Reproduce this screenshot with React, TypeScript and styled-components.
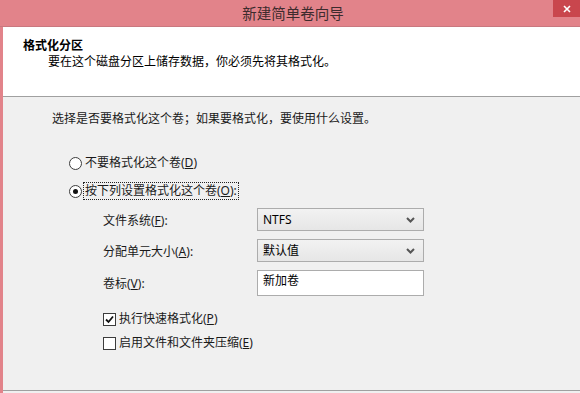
import React from "react";
import styled, { createGlobalStyle } from "styled-components";

const GlobalStyle = createGlobalStyle`
  html, body {
    margin: 0;
    padding: 0;
    background: #f0f0f0;
  }
  * {
    box-sizing: border-box;
  }
`;

const FONT = `"Segoe UI", "Noto Sans", "Noto Sans CJK SC", sans-serif`;

const Window = styled.div`
  width: 580px;
  height: 393px;
  background: #e2838a;
  display: flex;
  flex-direction: column;
  overflow: hidden;
  font-family: ${FONT};
  font-size: 12px;
  color: #1a1a1a;
`;

const TitleBar = styled.div`
  height: 27px;
  flex: none;
  display: grid;
  grid-template-columns: 27px 1fr 27px;
  align-items: start;
  border-bottom: 1px solid #c9787f;
`;

const Title = styled.div`
  grid-column: 2;
  height: 26px;
  line-height: 26px;
  text-align: center;
  padding-left: 6px;
  font-size: 14.5px;
  color: #3d2b2d;
  font-family: "Noto Sans CJK SC", sans-serif;
`;

const CloseButton = styled.div`
  grid-column: 3;
  height: 17px;
  background: #c9464d;
  color: #fff;
  display: flex;
  align-items: center;
  justify-content: center;
`;

const Frame = styled.div`
  flex: 1;
  margin-left: 3px;
  display: flex;
  flex-direction: column;
  background: #f0f0f0;
  padding-bottom: 2px;
`;

const Header = styled.header`
  height: 70px;
  flex: none;
  background: #fff;
  border-bottom: 1px solid #a0a0a0;
  padding: 11px 0 0 20px;
  line-height: 16px;
`;

const HeaderTitle = styled.div`
  font-weight: bold;
  color: #000;
`;

const HeaderText = styled.div`
  margin-left: 25px;
  color: #000;
`;

const Body = styled.section`
  flex: 1;
  border-bottom: 1px solid #a0a0a0;
  padding: 14px 0 0 49px;
  line-height: 16px;
`;

const Intro = styled.p`
  margin: 0 0 28px;
`;

const Choice = styled.label`
  display: flex;
  align-items: center;
  gap: 2px;
  margin: 0 0 12px 17px;
  height: 16px;
`;

const ChoiceText = styled.span<{ $focused?: boolean }>`
  outline: ${({ $focused }) => ($focused ? "1px dotted #222" : "none")};
  padding: 0 1px;
`;

const RadioMark = styled.span<{ $checked?: boolean }>`
  width: 13px;
  height: 13px;
  border-radius: 50%;
  border: 1px solid #3c3c3c;
  background: #fff;
  display: flex;
  align-items: center;
  justify-content: center;

  &::after {
    content: "";
    width: 5px;
    height: 5px;
    border-radius: 50%;
    background: ${({ $checked }) => ($checked ? "#111" : "transparent")};
  }
`;

const FormGrid = styled.div`
  display: grid;
  grid-template-columns: 154px 167px;
  row-gap: 8px;
  align-items: center;
  margin: -3px 0 0 51px;
`;

const FieldLabel = styled.div`
  padding-top: 2px;
`;

const Select = styled.div`
  height: 23px;
  border: 1px solid #acacac;
  background: linear-gradient(#f2f2f2, #e6e6e6);
  display: flex;
  align-items: center;
  justify-content: space-between;
  padding: 0 8px 0 5px;
  color: #000;
`;

const TextBox = styled.div`
  height: 26px;
  border: 1px solid #acacac;
  background: #fff;
  padding: 2px 5px 0;
  color: #000;
`;

const Checks = styled.div`
  margin: 15px 0 0 51px;
  display: flex;
  flex-direction: column;
  gap: 8px;
`;

const Check = styled.label`
  display: flex;
  align-items: center;
  gap: 3px;
  height: 16px;
`;

const CheckMark = styled.span`
  width: 13px;
  height: 13px;
  border: 1px solid #3c3c3c;
  background: #fff;
  display: flex;
  align-items: center;
  justify-content: center;
`;

const U = styled.span`
  text-decoration: underline;
`;

const Chevron = () => (
  <svg width="9" height="6" viewBox="0 0 9 6">
    <path d="M1 1 L4.5 4.5 L8 1" fill="none" stroke="#555" strokeWidth="2" />
  </svg>
);

const Tick = () => (
  <svg width="9" height="9" viewBox="0 0 9 9">
    <path d="M1 4.5 L3.5 7 L8 1.5" fill="none" stroke="#111" strokeWidth="1.8" />
  </svg>
);

const Cross = () => (
  <svg width="8" height="8" viewBox="0 0 8 8">
    <path d="M1 1 L7 7 M7 1 L1 7" stroke="#fff" strokeWidth="1.6" />
  </svg>
);

const App = () => (
  <>
    <GlobalStyle />
    <Window>
      <TitleBar>
        <Title>新建简单卷向导</Title>
        <CloseButton>
          <Cross />
        </CloseButton>
      </TitleBar>
      <Frame>
        <Header>
          <HeaderTitle>格式化分区</HeaderTitle>
          <HeaderText>要在这个磁盘分区上储存数据，你必须先将其格式化。</HeaderText>
        </Header>
        <Body>
          <Intro>选择是否要格式化这个卷；如果要格式化，要使用什么设置。</Intro>
          <Choice>
            <RadioMark />
            <ChoiceText>
              不要格式化这个卷(<U>D</U>)
            </ChoiceText>
          </Choice>
          <Choice>
            <RadioMark $checked />
            <ChoiceText $focused>
              按下列设置格式化这个卷(<U>O</U>):
            </ChoiceText>
          </Choice>
          <FormGrid>
            <FieldLabel>
              文件系统(<U>F</U>):
            </FieldLabel>
            <Select>
              <span>NTFS</span>
              <Chevron />
            </Select>
            <FieldLabel>
              分配单元大小(<U>A</U>):
            </FieldLabel>
            <Select>
              <span>默认值</span>
              <Chevron />
            </Select>
            <FieldLabel>
              卷标(<U>V</U>):
            </FieldLabel>
            <TextBox>新加卷</TextBox>
          </FormGrid>
          <Checks>
            <Check>
              <CheckMark>
                <Tick />
              </CheckMark>
              <span>
                执行快速格式化(<U>P</U>)
              </span>
            </Check>
            <Check>
              <CheckMark />
              <span>
                启用文件和文件夹压缩(<U>E</U>)
              </span>
            </Check>
          </Checks>
        </Body>
      </Frame>
    </Window>
  </>
);

export default App;
